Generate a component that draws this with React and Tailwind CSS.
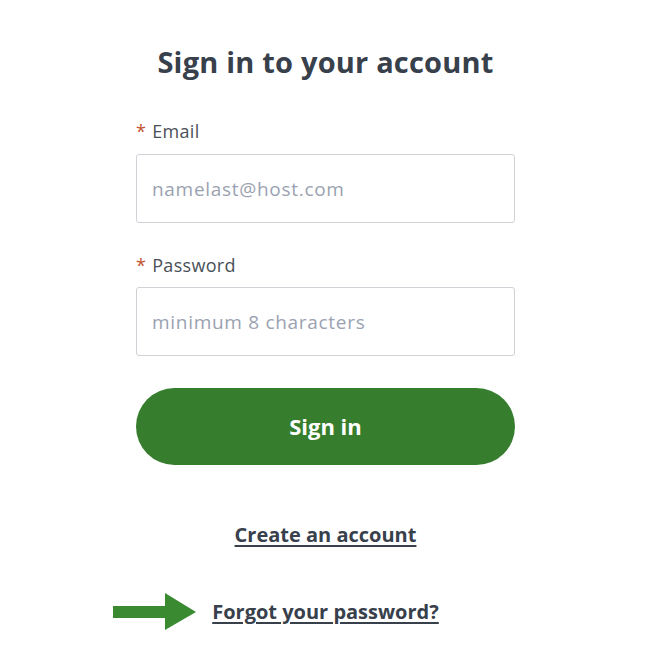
const font = { fontFamily: '"Open Sans", "Noto Sans", sans-serif' };

export default function App() {
  return (
    <div className="min-h-[665px] w-[650px] bg-white" style={font}>
      <div className="w-[379px] mx-auto pl-[1px] box-content pt-[40px] flex flex-col">
        <h1 className="text-center text-[29px] leading-[44px] font-bold text-[#38404c] tracking-[0.2px]">
          Sign in to your account
        </h1>

        <label className="mt-[35px] text-[18px] leading-[24px] tracking-[0.3px] text-[#4a4f57]">
          <span className="text-[#c0522d] mr-[6px]">*</span>Email
        </label>
        <input
          type="text"
          placeholder="namelast@host.com"
          className="mt-[11px] h-[69px] w-full border border-[#cfd2d6] rounded-[3px] px-[15px] text-[19px] tracking-[0.7px] placeholder:text-[#9aa2b1] outline-none"
        />

        <label className="mt-[30px] text-[18px] leading-[24px] tracking-[0.3px] text-[#4a4f57]">
          <span className="text-[#c0522d] mr-[6px]">*</span>Password
        </label>
        <input
          type="password"
          placeholder="minimum 8 characters"
          className="mt-[10px] h-[69px] w-full border border-[#cfd2d6] rounded-[3px] px-[15px] text-[19px] tracking-[0.7px] placeholder:text-[#9aa2b1] outline-none"
        />

        <button className="mt-[32px] h-[77px] w-full rounded-full bg-[#367e2d] text-white text-[22px] font-bold">
          Sign in
        </button>

        <a href="#" className="mt-[56px] self-center text-[20px] leading-[28px] font-bold text-[#38404c] underline underline-offset-[3px]">
          Create an account
        </a>

        <div className="mt-[49px] self-center relative">
          <svg
            className="absolute left-[-99px] top-[-5px]"
            width="84"
            height="38"
            viewBox="0 0 84 38"
          >
            <polygon
              points="0,13 52,13 52,0 83,19 52,37 52,25 0,25"
              fill="#3a8a32"
            />
          </svg>
          <a href="#" className="text-[20px] leading-[28px] font-bold text-[#38404c] underline underline-offset-[3px]">
            Forgot your password?
          </a>
        </div>
      </div>
    </div>
  );
}
